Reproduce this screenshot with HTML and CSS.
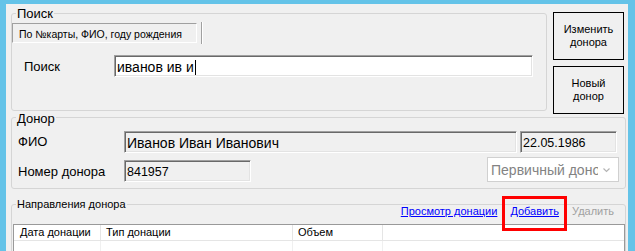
FILE: index.html
```html
<!DOCTYPE html>
<html>
<head>
    <title>Доноры</title>
    <meta charset="UTF-8">
    <link rel="stylesheet" href="styles.css">
</head>
<body>
    <div class="window">
        <div class="form">
            <div class="top-row">
                <section class="group search-group">
                    <div class="group-title">Поиск</div>
                    <div class="toolstrip">
                        <div class="tab">По №карты, ФИО, году рождения</div>
                        <div class="strip-sep"></div>
                    </div>
                    <div class="search-row">
                        <label class="search-label">Поиск</label>
                        <div class="field search-input">иванов ив и<span class="caret"></span></div>
                    </div>
                </section>

                <div class="buttons">
                    <button class="btn">Изменить<br>донора</button>
                    <button class="btn">Новый<br>донор</button>
                </div>
            </div>

            <section class="group donor-group">
                <div class="group-title">Донор</div>
                <div class="row fio-row">
                    <label class="donor-label">ФИО</label>
                    <div class="field readonly fio-field">Иванов Иван Иванович</div>
                    <div class="field readonly num date-field">22.05.1986</div>
                </div>
                <div class="row num-row">
                    <label class="donor-label">Номер донора</label>
                    <div class="field readonly num number-field">841957</div>
                    <div class="combo">
                        <span class="combo-text">Первичный донор</span>
                        <svg class="combo-arrow" width="7" height="5" viewBox="0 0 7 5">
                            <path d="M0.5 0.5 L3.5 3.5 L6.5 0.5" fill="none" stroke="#b4b4b4" stroke-width="1.2"/>
                        </svg>
                    </div>
                </div>
            </section>

            <section class="group dirs-group">
                <div class="dirs-head">
                    <div class="group-title small">Направления донора</div>
                    <div class="links">
                        <a href="#" class="link">Просмотр донации</a>
                        <a href="#" class="link link-add">Добавить</a>
                        <span class="link disabled">Удалить</span>
                    </div>
                </div>
                <div class="grid">
                    <div class="hcell first">Дата донации</div>
                    <div class="hcell">Тип донации</div>
                    <div class="hcell">Объем</div>
                    <div class="hcell last"></div>
                    <div class="bcell"></div>
                    <div class="bcell"></div>
                    <div class="bcell"></div>
                    <div class="bcell last"></div>
                </div>
            </section>
        </div>
    </div>
</body>
</html>
```

FILE: styles.css
```css
/* WinForms-like donor window */
* { box-sizing: border-box; }

body {
    margin: 0;
    background: #64c3e8;
    font-family: "Liberation Sans", Arial, sans-serif;
    color: #000;
    overflow: hidden;
}

.window {
    height: 251px;
    padding: 4px 7px 0 6px;
}

.form {
    height: 100%;
    background: #f0f0f0;
    padding-left: 5px;
    overflow: hidden;
}

/* group boxes */
.group {
    border: 1px solid #d5d5d5;
    border-radius: 3px;
}

.group-title {
    width: fit-content;
    background: #f0f0f0;
    padding: 0 1px;
    margin-left: 4px;
    font-size: 13px;
    line-height: 14px;
}

.group-title.small {
    font-size: 11px;
    line-height: 13px;
}

/* top part */
.top-row {
    display: flex;
    align-items: flex-start;
}

.search-group {
    width: 536px;
    margin-top: 9px;
    padding-bottom: 33px;
}

.search-group .group-title { margin-top: -7px; }

.toolstrip {
    display: flex;
    margin-top: 2px;
}

.tab {
    width: 185px;
    height: 20px;
    border: 1px solid;
    border-color: #a0a0a0 #fff #fff #a0a0a0;
    padding: 2px 0 0 6px;
    font-size: 10.5px;
    line-height: 16px;
    white-space: nowrap;
}

.strip-sep {
    width: 2px;
    height: 22px;
    margin: -1px 0 0 4px;
    background: #a0a0a0;
    border-right: 1px solid #fff;
}

.search-row {
    display: flex;
    align-items: center;
    margin-top: 11px;
}

.search-label {
    width: 102px;
    padding-left: 12px;
    font-size: 13px;
}

.field {
    height: 22px;
    border: 1px solid;
    border-color: #a0a0a0 #fff #fff #a0a0a0;
    box-shadow: inset 1px 1px 0 #696969, inset -1px -1px 0 #e3e3e3;
    background: #fff;
    padding: 2px 0 0 2px;
    font-size: 14px;
    line-height: 18px;
    white-space: nowrap;
    overflow: hidden;
}

.field.readonly { background: #f0f0f0; }
.field.num { font-size: 12.5px; }

.search-input { width: 419px; }

.caret {
    display: inline-block;
    width: 1px;
    height: 15px;
    margin-left: 1px;
    background: #000;
    vertical-align: -3px;
}

.buttons {
    display: flex;
    flex-direction: column;
    gap: 6px;
    margin: 8px 0 0 6px;
}

.btn {
    width: 71px;
    height: 48px;
    padding: 0;
    border: 1px solid #000;
    background: #f0f0f0;
    color: #000;
    font-family: inherit;
    font-size: 11px;
    line-height: 13px;
}

/* donor */
.donor-group {
    width: 615px;
    margin-top: 3px;
    padding-bottom: 5px;
}

.donor-group .group-title { margin-top: -6px; }

.row {
    display: flex;
    align-items: center;
}

.fio-row { margin-top: 4px; }

.num-row {
    margin-top: 4px;
    align-items: flex-start;
}

.donor-label {
    width: 112px;
    padding-left: 6px;
    font-size: 13px;
    line-height: 23px;
}

.num-row .donor-label,
.number-field { margin-top: 3px; }

.fio-field { width: 393px; }
.date-field { width: 97px; margin-left: 3px; }
.number-field { width: 127px; }

.combo {
    display: flex;
    align-items: center;
    width: 132px;
    height: 25px;
    margin: 0 6px 0 auto;
    padding-left: 3px;
    border: 1px solid #d0d0d0;
    background: #fff;
    color: #838383;
    font-size: 14px;
    line-height: 16px;
}

.combo-text {
    width: 107px;
    overflow: hidden;
    white-space: nowrap;
}

.combo-arrow { margin: 1px 8px 0 auto; }

/* directions */
.dirs-group {
    width: 615px;
    height: 120px;
    margin-top: 15px;
}

.dirs-head {
    display: flex;
    align-items: flex-start;
}

.dirs-head .group-title { margin-top: -7px; }

.links {
    display: flex;
    gap: 13px;
    margin: 0 11px 0 auto;
    font-size: 11px;
    line-height: 13px;
}

.link { color: #0000ff; }
.link.disabled { color: #a0a0a0; }

.link-add { position: relative; }

.link-add::after {
    content: "";
    position: absolute;
    left: -8px;
    right: -8px;
    top: -9px;
    bottom: -13px;
    border: 3px solid #ff0000;
}

.grid {
    display: grid;
    grid-template-columns: 87px 192px 90px 1fr;
    width: 612px;
    margin: 6px 0 0 1px;
    border: 1px solid #999;
    background: #fff;
    font-size: 11px;
}

.hcell {
    height: 16px;
    padding-left: 5px;
    line-height: 15px;
    border-right: 1px solid #e5e5e5;
    border-bottom: 1px solid #e5e5e5;
    white-space: nowrap;
}

.hcell.first { padding-left: 6px; }

.bcell {
    height: 40px;
    border-right: 1px solid #f0f0f0;
}

.hcell.last, .bcell.last { border-right: none; }
```
